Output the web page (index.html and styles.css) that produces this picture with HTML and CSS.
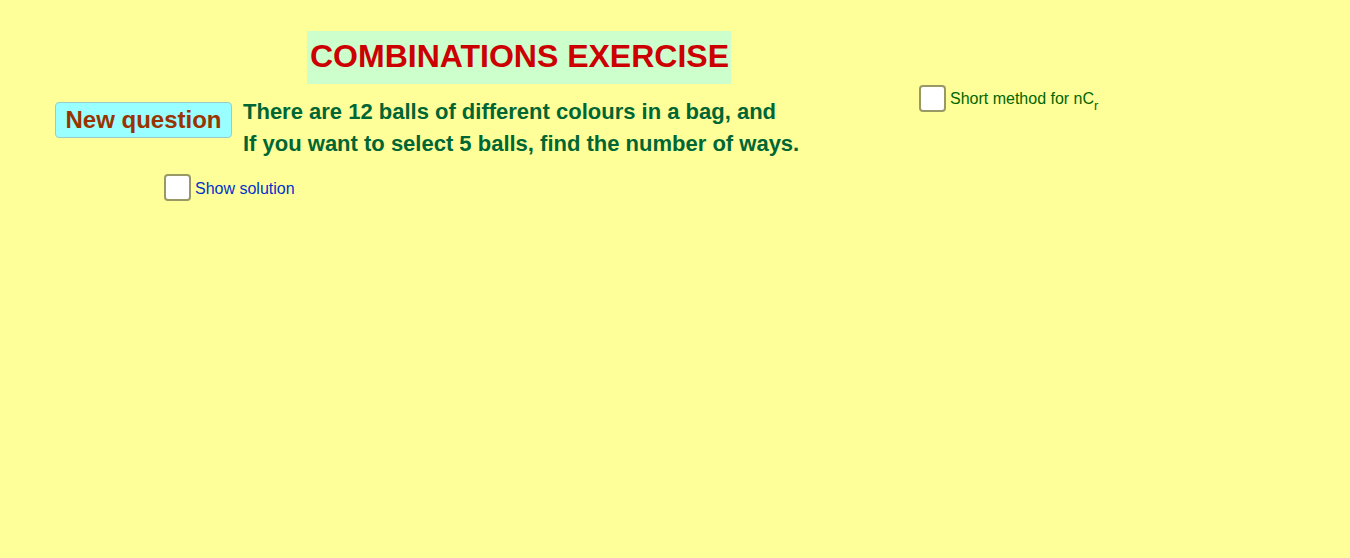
FILE: index.html
```html
<!DOCTYPE html>
<html>
<head>
<meta charset="utf-8">
<link rel="stylesheet" href="styles.css">
</head>
<body>
<div class="canvas">
  <div class="title">COMBINATIONS EXERCISE</div>
  <button class="newq">New question</button>
  <div class="question">
    <div>There are 12 balls of different colours in a bag, and</div>
    <div>If you want to select 5 balls, find the number of ways.</div>
  </div>
  <label class="check solution"><span class="box"></span><span class="lbl">Show solution</span></label>
  <label class="check short"><span class="box"></span><span class="lbl">Short method for nC<sub>r</sub></span></label>
</div>
</body>
</html>
```
FILE: styles.css
```css
html, body {
  margin: 0;
  padding: 0;
  background: #ffff99;
}
.canvas {
  position: relative;
  width: 1350px;
  height: 558px;
  background: #ffff99;
  font-family: "Liberation Sans", Arial, sans-serif;
  overflow: hidden;
}
.title {
  position: absolute;
  left: 307px;
  top: 31px;
  width: 424px;
  height: 53px;
  background: #ccffcc;
  color: #cc0000;
  font-weight: bold;
  font-size: 32px;
  line-height: 51px;
  text-align: center;
  box-sizing: border-box;
  padding-left: 1px;
}
.newq {
  position: absolute;
  left: 55px;
  top: 102px;
  width: 177px;
  height: 36px;
  margin: 0;
  padding: 0;
  background: #99ffff;
  border: 1px solid #99cccc;
  border-radius: 4px;
  color: #993300;
  font-family: "Liberation Sans", Arial, sans-serif;
  font-weight: bold;
  font-size: 24px;
  line-height: 34px;
  text-align: center;
}
.question {
  position: absolute;
  left: 243px;
  top: 96px;
  color: #006633;
  font-weight: bold;
  font-size: 22px;
  line-height: 32px;
  white-space: nowrap;
}
.check {
  position: absolute;
  display: flex;
  align-items: center;
  gap: 4px;
  font-size: 16px;
  white-space: nowrap;
}
.box {
  width: 23px;
  height: 23px;
  background: #ffffff;
  border: 2px solid #999966;
  border-radius: 4px;
}
.solution {
  left: 164px;
  top: 174px;
  color: #0033cc;
}
.short {
  left: 919px;
  top: 85px;
  color: #006600;
}
.solution .lbl {
  position: relative;
  top: 1px;
}
.short sub {
  font-size: 13px;
  vertical-align: -6px;
  line-height: 0;
}
```
